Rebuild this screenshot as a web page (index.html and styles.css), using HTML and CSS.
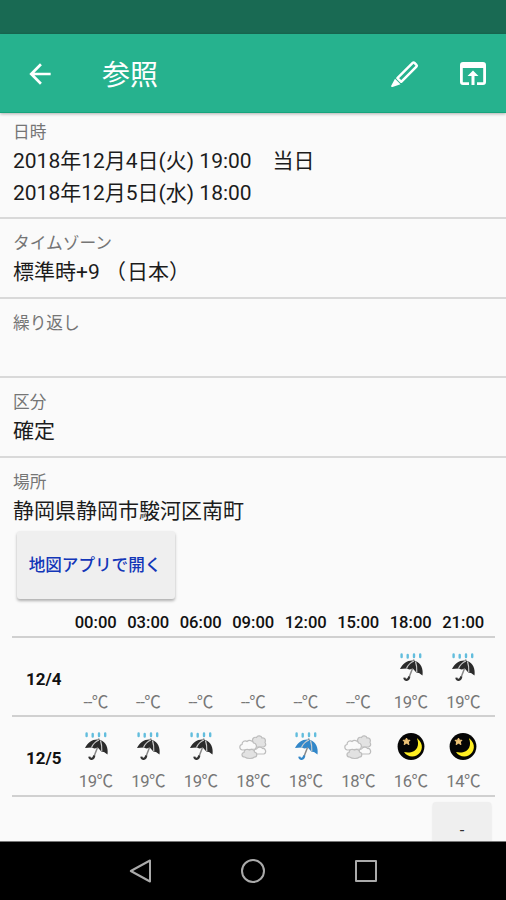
FILE: index.html
```html
<!DOCTYPE html>
<html lang="ja">
<head>
    <meta charset="UTF-8">
    <meta name="viewport" content="width=device-width, initial-scale=1.0">
    <title>参照</title>
    <link rel="stylesheet" href="styles.css">
</head>
<body>
    <!-- Weather icons -->
    <svg class="icon-defs" width="0" height="0">
        <symbol id="rain" viewBox="0 0 28 30">
            <path d="M4.600 2.500v2.500M10.700 3v2.500M17 2.500v2.500M23.200 2.500v2.500" stroke="#62bddd" stroke-width="2.400" stroke-linecap="round"/>
            <path d="M16.500 7.500l.5 2.500" stroke="#777" stroke-width="1.500"/>
            <path class="canopy" d="M3 17C6 10 13 7 18.500 9c5.500 2 8 8 7 14.500l-3.500-2.500-2.500-.3-3.500-4-3.500.8-3-1z"/>
            <path d="M17 9c-3.500 1.500-6 4-7.500 7.500M18.500 9.500c1.200 3.500 1.500 7 1.300 11" fill="none" stroke="#ccc" stroke-width="1.200"/>
            <path d="M15.500 16.500l-3.500 9" stroke="#888" stroke-width="1.500"/>
            <path class="handle" d="M12.300 24.500c-.8 4-4.500 4.500-5 1.200" fill="none" stroke-width="2.200"/>
        </symbol>
        <symbol id="cloud" viewBox="0 0 28 30">
            <g fill="#fafafa" stroke="#bdbdbd" stroke-width="1.200">
                <path fill="#e2e2e2" d="M14 11c-1.500-3 1-5.500 3.500-4.500 1-2.500 5-2 5.500.5 3-.5 4 2 3 4.500 1.500 2 .5 4-1.500 4.500H17z"/>
                <path d="M3.500 19C0 18.500 0 14 3 13.500 3 10.500 6 9 8 10.500c2-2 6-1 6.500 1.500 3 0 4 4 1.500 6z"/>
                <path d="M17 23c-3-1-2.500-5 .5-5 1-2.500 5-2.500 6-.5 3-.5 4.500 4 1.500 5.500z"/>
                <path fill="#e2e2e2" d="M5.500 26c-3 0-3.500-4-.5-4.500 0-3 3.500-4 5.500-2.500 2.500-1.500 5 0 5 2 3 .5 3 5 0 5-2 2-7 2-10 0z"/>
            </g>
        </symbol>
        <symbol id="moon" viewBox="0 0 28 30">
            <circle cx="14" cy="15.500" r="13.400" fill="#050505"/>
            <path d="M20.500 7.500C27 13 26 21 19.500 24.500c-4.500 2.200-10 .5-12.500-3.500 6 1.500 11.500-.5 13.200-4.500 1.300-3 1-6-.2-9z" fill="#ffee22"/>
            <path d="M9.500 7l1 2.200 2.500.1-1.700 1.700.7 2.600-2.500-1.400-2.400 1.400.6-2.600-1.700-1.700 2.500-.1z" fill="#efc477" stroke="#efc477"/>
        </symbol>
    </svg>

    <div class="screen">
        <div class="status-bar"></div>
        <header class="app-bar">
            <svg class="back" viewBox="0 0 24 24" fill="#fff"><path d="M20 11H7.830l5.590-5.590L12 4l-8 8 8 8 1.410-1.410L7.830 13H20v-2z"/></svg>
            <h1>参照</h1>
            <svg class="edit" viewBox="0 0 30 30">
                <path d="M7.400 20.200L22.700 4.900q.9-.9 1.800 0l1.900 1.900q.9.9 0 1.800L11.200 23.800z" fill="none" stroke="#fff" stroke-width="2.500" stroke-linejoin="round"/>
                <path d="M5 20.800l5.500 5.500L2.500 29q-1.700.4-1.300-1.300z" fill="#fff"/>
            </svg>
            <svg class="open" viewBox="0 0 28 26" fill="#fff">
                <path d="M4 1h20q3 0 3 3v17q0 3-3 3h-6v-2.800h6.200V7H3.800v14.200H10V24H4q-3 0-3-3V4q0-3 3-3z"/>
                <path d="M14 9.500l5.500 5.500h-4v9h-3v-9h-4z"/>
            </svg>
        </header>

        <main class="content">
            <section class="field">
                <div class="label">日時</div>
                <div class="value">2018年12月4日(火) 19:00　当日</div>
                <div class="value">2018年12月5日(水) 18:00</div>
            </section>
            <section class="field">
                <div class="label">タイムゾーン</div>
                <div class="value">標準時+9 <span class="paren">（</span>日本）</div>
            </section>
            <section class="field">
                <div class="label">繰り返し</div>
                <div class="value"></div>
            </section>
            <section class="field">
                <div class="label">区分</div>
                <div class="value">確定</div>
            </section>
            <section class="field place">
                <div class="label">場所</div>
                <div class="value">静岡県静岡市駿河区南町</div>
                <button class="btn map-btn">地図アプリで開く</button>
            </section>

            <div class="weather">
                <div class="row times">
                    <span></span><span>00:00</span><span>03:00</span><span>06:00</span><span>09:00</span><span>12:00</span><span>15:00</span><span>18:00</span><span>21:00</span>
                </div>
                <div class="row day">
                    <div class="date">12/4</div>
                    <div class="cell">--℃</div>
                    <div class="cell">--℃</div>
                    <div class="cell">--℃</div>
                    <div class="cell">--℃</div>
                    <div class="cell">--℃</div>
                    <div class="cell">--℃</div>
                    <div class="cell"><svg><use href="#rain"/></svg>19℃</div>
                    <div class="cell"><svg><use href="#rain"/></svg>19℃</div>
                </div>
                <div class="row day">
                    <div class="date">12/5</div>
                    <div class="cell"><svg><use href="#rain"/></svg>19℃</div>
                    <div class="cell"><svg><use href="#rain"/></svg>19℃</div>
                    <div class="cell"><svg><use href="#rain"/></svg>19℃</div>
                    <div class="cell"><svg><use href="#cloud"/></svg>18℃</div>
                    <div class="cell"><svg class="light"><use href="#rain"/></svg>18℃</div>
                    <div class="cell"><svg><use href="#cloud"/></svg>18℃</div>
                    <div class="cell"><svg><use href="#moon"/></svg>16℃</div>
                    <div class="cell"><svg><use href="#moon"/></svg>14℃</div>
                </div>
            </div>
            <button class="btn more-btn">-</button>
        </main>

        <nav class="nav-bar">
            <svg viewBox="0 0 24 24"><path d="M21 1.500v21L1.800 12z"/></svg>
            <svg viewBox="0 0 24 24"><circle cx="12" cy="12" r="11"/></svg>
            <svg viewBox="0 0 24 24"><rect x="2" y="2" width="20" height="20"/></svg>
        </nav>
    </div>
</body>
</html>
```
FILE: styles.css
```css
* {
    box-sizing: border-box;
}

body {
    margin: 0;
    font-family: Roboto, "Noto Sans CJK JP", sans-serif;
    background-color: #fafafa;
}

.icon-defs {
    display: none;
}

.screen {
    display: flex;
    flex-direction: column;
    width: 506px;
    height: 900px;
    overflow: hidden;
}

.status-bar {
    height: 34px;
    flex: none;
    background-color: #196a53;
}

.app-bar {
    display: flex;
    align-items: center;
    flex: none;
    height: 79px;
    padding: 0 19px 0 24px;
    background-color: #26b28e;
    border-bottom: 1px solid #16a47c;
    box-shadow: 0 1px 3px rgba(0, 0, 0, 0.3);
    z-index: 1;
}

.app-bar h1 {
    flex: 1;
    margin: 0 0 0 46px;
    padding-top: 6px;
    font-size: 28px;
    font-weight: normal;
    line-height: 40px;
    color: #fff;
}

.back {
    width: 32px;
    height: 32px;
    margin-top: 2px;
}

.edit {
    width: 30px;
    height: 30px;
    margin-right: 39px;
}

.open {
    width: 28px;
    height: 26px;
    margin-top: 2px;
}

.content {
    flex: 1;
    min-height: 0;
    overflow: hidden;
    display: flex;
    flex-direction: column;
}

.field {
    flex: none;
    padding: 7px 13px 8px;
    border-bottom: 2px solid #d9d9d9;
}

.label {
    font-size: 16.700px;
    line-height: 25px;
    color: #757575;
}

.value {
    height: 32px;
    font-size: 21px;
    line-height: 32px;
    color: #1c1c1c;
    white-space: pre;
}

.paren {
    margin: 0 1px 0 0;
}

.field + .field {
    height: 79.700px;
    padding-top: 12px;
}

.field.place {
    height: auto;
    padding-bottom: 0;
    border-bottom: none;
}

.btn {
    display: block;
    flex: none;
    border: none;
    border-radius: 3px;
    background-color: #efefef;
    box-shadow: 0 2px 3px rgba(0, 0, 0, 0.3);
    font-family: inherit;
    font-size: 16.600px;
}

.map-btn {
    width: 158px;
    height: 68px;
    margin: 4px 0 0 4px;
    padding: 0 2px 2px 0;
    color: #1236b8;
    font-weight: 500;
}

.weather {
    flex: none;
    margin: 8px 11px 0 12px;
}

.row {
    display: grid;
    grid-template-columns: 57.500px repeat(8, 52.500px);
    border-bottom: 2px solid #d0d0d0;
}

.times {
    height: 31px;
    font-size: 16.600px;
    font-weight: 500;
    line-height: 31px;
    text-align: center;
    color: #111;
}

.day {
    height: 79.300px;
}

.date {
    padding-left: 14px;
    font-size: 17px;
    font-weight: 700;
    line-height: 83px;
    color: #111;
}

.cell {
    display: flex;
    flex-direction: column;
    align-items: center;
    justify-content: flex-end;
    padding-bottom: 6px;
    font-size: 16.600px;
    line-height: 24px;
    letter-spacing: -0.400px;
    color: #777;
}

.cell svg {
    width: 28px;
    height: 30px;
    margin-bottom: 9px;
}

.light {
    --canopy: #3287c9;
}

.canopy {
    fill: var(--canopy, #2b2b2b);
}

.handle {
    stroke: var(--canopy, #333);
}

.more-btn {
    align-self: flex-end;
    width: 58px;
    height: 58px;
    margin: 5px 15px 0 0;
    color: #333;
    box-shadow: 0 1px 2px rgba(0, 0, 0, 0.15);
}

.nav-bar {
    display: flex;
    flex: none;
    align-items: center;
    justify-content: center;
    gap: 88.500px;
    height: 59px;
    background-color: #000;
    border-top: 1px solid #777;
}

.nav-bar svg {
    width: 24px;
    height: 24px;
    fill: none;
    stroke: #aaa;
    stroke-width: 2;
    stroke-linejoin: round;
}
```
